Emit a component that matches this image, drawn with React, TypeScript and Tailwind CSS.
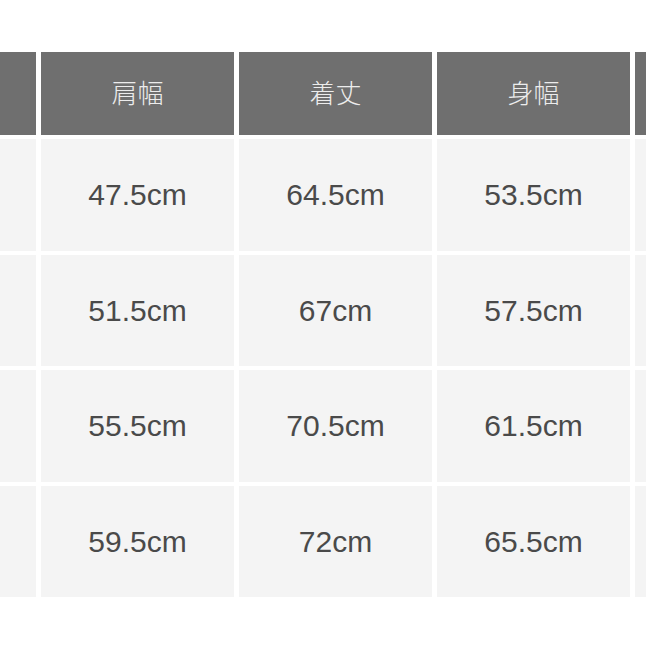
const headers = ["肩幅", "着丈", "身幅"];

const rows = [
  ["47.5cm", "64.5cm", "53.5cm"],
  ["51.5cm", "67cm", "57.5cm"],
  ["55.5cm", "70.5cm", "61.5cm"],
  ["59.5cm", "72cm", "65.5cm"],
];

export default function App() {
  return (
    <div className="w-[646px] h-[646px] bg-white overflow-hidden pt-[52px]">
      <div className="flex flex-col gap-[4px]">
        {/* header */}
        <div className="flex gap-[5px] h-[83px]">
          <div className="w-[36px] shrink-0 bg-[#6f6f6f]" />
          {headers.map((h) => (
            <div
              key={h}
              className="w-[193px] shrink-0 bg-[#6f6f6f] flex items-center justify-center pb-[4px] text-[26px] text-[#ececec] font-['Noto_Sans_CJK_JP',sans-serif] font-light"
            >
              {h}
            </div>
          ))}
          <div className="w-[11px] shrink-0 bg-[#6f6f6f]" />
        </div>

        {/* body */}
        {rows.map((r, i) => (
          <div key={i} className="flex gap-[5px] h-[111.5px]">
            <div className="w-[36px] shrink-0 bg-[#f4f4f4]" />
            {r.map((v, j) => (
              <div
                key={j}
                className="w-[193px] shrink-0 bg-[#f4f4f4] flex items-center justify-center text-[30px] text-[#4a4a4a] font-['Liberation_Sans',Arial,sans-serif]"
              >
                {v}
              </div>
            ))}
            <div className="w-[11px] shrink-0 bg-[#f4f4f4]" />
          </div>
        ))}
      </div>
    </div>
  );
}
